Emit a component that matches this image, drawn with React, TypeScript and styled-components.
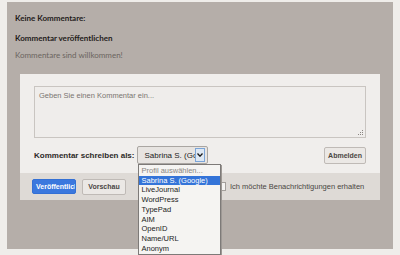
import styled, { createGlobalStyle } from "styled-components";

const GlobalStyle = createGlobalStyle`
  html, body {
    margin: 0;
    padding: 0;
    background: #efedea;
  }
  body {
    font-family: "Liberation Sans", Arial, sans-serif;
  }
`;

const Page = styled.div`
  width: 400px;
  height: 255px;
  padding: 2px 7px 0 7px;
  box-sizing: border-box;
`;

const Panel = styled.div`
  background: #b5aea9;
  padding: 11px 13px 49px 8px;
`;

const Heading = styled.div<{ $gap?: number }>`
  font-family: Lato, "Liberation Sans", sans-serif;
  font-weight: 700;
  font-size: 8px;
  line-height: 10px;
  color: #1f1b19;
  margin-top: ${(p) => p.$gap ?? 0}px;
`;

const Welcome = styled.div`
  font-family: Lato, "Liberation Sans", sans-serif;
  font-size: 8px;
  line-height: 10px;
  color: #6b6560;
  margin-top: 7px;
`;

const Form = styled.div`
  margin: 14px 0 0 5px;
  background: #f0eeec;
`;

const Upper = styled.div`
  padding: 12px 14px 9px;
`;

const TextBox = styled.div`
  position: relative;
  height: 52px;
  box-sizing: border-box;
  border: 1px solid #c9c5c1;
  background: #efedeb;
  padding: 4px 4px;
  font-size: 7.5px;
  color: #7a7571;
`;

const Grip = styled.svg`
  position: absolute;
  right: 1px;
  bottom: 1px;
`;

const Row = styled.div`
  display: flex;
  align-items: center;
  margin-top: 8px;
  height: 18px;
`;

const Label = styled.span`
  font-weight: 700;
  font-size: 8px;
  color: #2c2927;
  margin-right: 3px;
`;

const SelectWrap = styled.div`
  position: relative;
`;

const Select = styled.div`
  display: flex;
  align-items: center;
  width: 71px;
  height: 18px;
  box-sizing: border-box;
  border: 1px solid #aaa6a2;
  border-radius: 2px;
  background: #e7e4e1;
  padding: 0 2px 0 6px;
  overflow: hidden;
`;

const SelectText = styled.span`
  flex: 1;
  font-size: 8px;
  color: #222;
  white-space: nowrap;
  overflow: hidden;
`;

const ArrowBox = styled.span`
  display: flex;
  align-items: center;
  justify-content: center;
  width: 10px;
  height: 14px;
  box-sizing: border-box;
  border: 1px solid #7ba5d8;
  background: #dde7f3;
`;

const Dropdown = styled.ul`
  position: absolute;
  left: 1px;
  top: 18px;
  width: 83px;
  margin: 0;
  padding: 1px 0;
  list-style: none;
  box-sizing: border-box;
  border: 1px solid #7d7a78;
  background: #f5f4f2;
  box-shadow: 1px 1px 0 #9d9894;
  z-index: 5;
`;

const Option = styled.li<{ $active?: boolean; $muted?: boolean }>`
  font-size: 7.5px;
  line-height: 9.7px;
  padding-left: 2px;
  white-space: nowrap;
  background: ${(p) => (p.$active ? "#3474d8" : "transparent")};
  color: ${(p) => (p.$active ? "#ffffff" : p.$muted ? "#8a8682" : "#1c1c1c")};
`;

const Spacer = styled.div`
  flex: 1;
`;

const Button = styled.button<{ $primary?: boolean; $w: number; $h: number }>`
  width: ${(p) => p.$w}px;
  height: ${(p) => p.$h}px;
  padding: ${(p) => (p.$primary ? "0 0 0 3px" : "0")};
  margin: 0;
  box-sizing: border-box;
  font-family: "Liberation Sans", Arial, sans-serif;
  font-weight: 700;
  font-size: 7px;
  white-space: nowrap;
  overflow: hidden;
  text-align: ${(p) => (p.$primary ? "left" : "center")};
  border-radius: 2px;
  border: 1px solid ${(p) => (p.$primary ? "#3470d4" : "#bfbab6")};
  background: ${(p) => (p.$primary ? "#3b78de" : "#ebe8e5")};
  color: ${(p) => (p.$primary ? "#ffffff" : "#4a4643")};
`;

const Footer = styled.div`
  display: flex;
  align-items: center;
  gap: 6px;
  height: 27px;
  padding: 0 12px;
  background: #dedad6;
`;

const Check = styled.label`
  display: flex;
  align-items: center;
  gap: 4px;
  margin-left: 85px;
  font-size: 7.5px;
  color: #4a4643;
  white-space: nowrap;
`;

const Box = styled.span`
  width: 7px;
  height: 7px;
  border: 1px solid #a39f9b;
  background: #f4f3f1;
`;

const options = [
  "Profil auswählen...",
  "Sabrina S. (Google)",
  "LiveJournal",
  "WordPress",
  "TypePad",
  "AIM",
  "OpenID",
  "Name/URL",
  "Anonym",
];

export default function App() {
  return (
    <>
      <GlobalStyle />
      <Page>
        <Panel>
          <Heading>Keine Kommentare:</Heading>
          <Heading $gap={10}>Kommentar veröffentlichen</Heading>
          <Welcome>Kommentare sind willkommen!</Welcome>
          <Form>
            <Upper>
              <TextBox>
                Geben Sie einen Kommentar ein...
                <Grip width="6" height="6" viewBox="0 0 6 6">
                  <rect x="4" y="0" width="1" height="1" fill="#8a8682" />
                  <rect x="2" y="2" width="1" height="1" fill="#8a8682" />
                  <rect x="4" y="2" width="1" height="1" fill="#8a8682" />
                  <rect x="0" y="4" width="1" height="1" fill="#8a8682" />
                  <rect x="2" y="4" width="1" height="1" fill="#8a8682" />
                  <rect x="4" y="4" width="1" height="1" fill="#8a8682" />
                </Grip>
              </TextBox>
              <Row>
                <Label>Kommentar schreiben als:</Label>
                <SelectWrap>
                  <Select>
                    <SelectText>Sabrina S. (Google)</SelectText>
                    <ArrowBox>
                      <svg width="6" height="4" viewBox="0 0 6 4">
                        <path d="M0.5 0.5 L3 3.2 L5.5 0.5" fill="none" stroke="#1a1a1a" strokeWidth="1.3" />
                      </svg>
                    </ArrowBox>
                  </Select>
                  <Dropdown>
                    {options.map((o, i) => (
                      <Option key={o} $muted={i === 0} $active={i === 1}>
                        {o}
                      </Option>
                    ))}
                  </Dropdown>
                </SelectWrap>
                <Spacer />
                <Button $w={42} $h={17}>Abmelden</Button>
              </Row>
            </Upper>
            <Footer>
              <Button $primary $w={44} $h={15}>Veröffentlichen</Button>
              <Button $w={44} $h={16}>Vorschau</Button>
              <Check>
                <Box />
                Ich möchte Benachrichtigungen erhalten
              </Check>
            </Footer>
          </Form>
        </Panel>
      </Page>
    </>
  );
}
